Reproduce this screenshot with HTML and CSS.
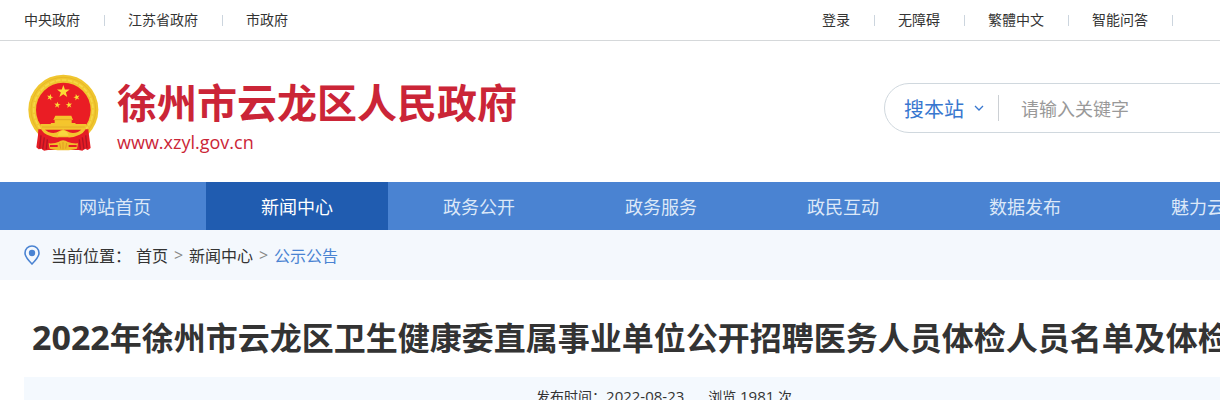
FILE: index.html
```html
<!DOCTYPE html>
<html lang="zh-CN">
<head>
  <meta charset="utf-8">
  <title>徐州市云龙区人民政府 - 公示公告</title>
  <link rel="stylesheet" href="styles.css">
</head>
<body>
  <div class="topbar">
    <div class="wrap">
      <ul class="top-links">
        <li><a href="#">中央政府</a></li>
        <li><a href="#">江苏省政府</a></li>
        <li><a href="#">市政府</a></li>
      </ul>
      <ul class="top-links top-tools">
        <li><a href="#">登录</a></li>
        <li><a href="#">无障碍</a></li>
        <li><a href="#">繁體中文</a></li>
        <li><a href="#">智能问答</a></li>
      </ul>
    </div>
  </div>

  <header class="header">
    <div class="wrap">
      <a class="brand" href="#">
        <svg class="emblem" viewBox="53 40 213 234" width="71" height="78" aria-hidden="true">
          <defs>
            <path id="star" d="M0 -10 L2.4 -3.2 L9.5 -3.1 L3.8 1.2 L5.9 8.1 L0 4 L-5.9 8.1 L-3.8 1.2 L-9.5 -3.1 L-2.4 -3.2 Z" />
          </defs>
          <!-- wheat ring -->
          <circle cx="159" cy="147" r="105" fill="#f0c62f" />
          <circle cx="159" cy="147" r="97" fill="none" stroke="#e2b023" stroke-width="2" />
          <circle cx="159" cy="147" r="89" fill="none" stroke="#f6d746" stroke-width="5" stroke-dasharray="14 4" />
          <circle cx="159" cy="148" r="82" fill="#ea1d24" />
          <!-- stars -->
          <g fill="#fbdc35">
            <use href="#star" transform="translate(159 93) scale(2)" />
            <use href="#star" transform="translate(119 110) rotate(15)" />
            <use href="#star" transform="translate(199 110) rotate(-15)" />
            <use href="#star" transform="translate(141 133) rotate(8)" />
            <use href="#star" transform="translate(176 133) rotate(-8)" />
          </g>
          <!-- gate -->
          <path d="M135 165 H183 L188 178 H184 V187 H195 L198 196 H119 L122 187 H133 V178 H129 Z" fill="#f5c52c" />
          <path d="M131 177 H186" stroke="#d99a1d" stroke-width="2" />
          <!-- drapes -->
          <path d="M84 206 H234 L236 224 L241 262 L232 268 L224 264 L216 270 L205 268 H113 L101 270 L94 264 L85 266 L78 260 L83 224 Z" fill="#e51c25" />
          <path d="M92 224 L88 262 M102 230 L97 266 M111 236 L108 266 M226 224 L230 262 M216 230 L221 266 M207 236 L210 266" stroke="#b01424" stroke-width="4" />
          <!-- ribbon and gear -->
          <path d="M90 190 H228 Q230 212 208 222 Q186 232 172 230 H146 Q132 232 110 222 Q88 212 90 190 Z" fill="#f3c52e" />
          <path d="M104 207 H213 L203 214 Q184 221 171 212 Q158 202 146 212 Q132 221 114 214 Z" fill="#e51c25" />
          <path d="M95 199 H223" stroke="#dca524" stroke-width="2" />
          <path d="M142 225 Q146 210 158 210 Q171 210 175 225 Z" fill="#f9d640" />
          <path d="M115 248 Q134 249 144 244 Q158 234 173 244 Q184 249 203 248 L200 264 Q184 268 175 269 H142 Q132 268 118 264 Z" fill="#f0bd2a" />
          <path d="M119 256 H142 M175 256 H199" stroke="#e51c25" stroke-width="6" />
          <path d="M148 247 L151 264 M158 244 V266 M169 247 L166 264" stroke="#dc8d20" stroke-width="2" />
        </svg>
        <span class="brand-text">
          <span class="brand-name">徐州市云龙区人民政府</span>
          <span class="brand-url">www.xzyl.gov.cn</span>
        </span>
      </a>
      <form class="search">
        <div class="scope">
          <select aria-label="搜索范围">
            <option>搜本站</option>
          </select>
          <svg viewBox="0 0 10 6" width="10" height="6" aria-hidden="true">
            <path d="M1 1 L5 5 L9 1" fill="none" stroke="#3877cf" stroke-width="1.3" />
          </svg>
        </div>
        <input type="text" placeholder="请输入关键字" aria-label="请输入关键字">
      </form>
    </div>
  </header>

  <nav class="nav">
    <div class="wrap">
      <a href="#">网站首页</a>
      <a href="#" class="active">新闻中心</a>
      <a href="#">政务公开</a>
      <a href="#">政务服务</a>
      <a href="#">政民互动</a>
      <a href="#">数据发布</a>
      <a href="#">魅力云龙</a>
    </div>
  </nav>

  <div class="crumbs">
    <div class="wrap">
      <svg class="pin" viewBox="0 0 16 20" width="16" height="20" aria-hidden="true">
        <path d="M8 1 C4 1 1 4 1 8 C1 12 4 15 8 19 C12 15 15 12 15 8 C15 4 12 1 8 1 Z" fill="none" stroke="#4a83d2" stroke-width="1.6" />
        <circle cx="8" cy="8" r="3.2" fill="#4a83d2" />
      </svg>
      <span class="label">当前位置：</span>
      <a href="#">首页</a>
      <span class="sep">&gt;</span>
      <a href="#">新闻中心</a>
      <span class="sep">&gt;</span>
      <a href="#" class="current">公示公告</a>
    </div>
  </div>

  <main class="wrap article">
    <h1><span class="year">2022</span>年徐州市云龙区卫生健康委直属事业单位公开招聘医务人员体检人员名单及体检</h1>
    <div class="meta">
      <span>发布时间：<span class="num">2022-08-23</span></span>
      <span>浏览 <span class="num">1981</span> 次</span>
    </div>
  </main>
</body>
</html>
```
FILE: styles.css
```css
* {
  box-sizing: border-box;
  margin: 0;
  padding: 0;
}

html {
  overflow: hidden auto;
}

body {
  min-width: 1328px;
  background: #fff;
  color: #333;
  font-family: "Open Sans", "Noto Sans CJK SC", sans-serif;
  font-size: 14px;
}

a {
  color: inherit;
  text-decoration: none;
}

ul {
  list-style: none;
}

.wrap {
  display: flex;
  align-items: center;
  width: 1280px;
  margin: 0 auto;
}

/* top bar */
.topbar {
  border-bottom: 1px solid #d5d8da;
}

.topbar .wrap {
  justify-content: space-between;
  height: 40px;
}

.top-links {
  display: flex;
  align-items: center;
  line-height: 20px;
}

.top-links li {
  display: flex;
  align-items: center;
}

.top-links li::after {
  content: "";
  width: 1px;
  height: 11px;
  margin: 0 23px 0 24px;
  background: #ccd5de;
}

.top-links:first-child li:last-child::after {
  display: none;
}

.top-tools {
  margin-right: 108px;
}

/* header */
.header .wrap {
  justify-content: space-between;
  height: 141px;
}

.brand {
  display: flex;
  align-items: center;
  gap: 18px;
  padding-left: 4px;
  color: #cb2537;
}

.emblem {
  margin-top: 2px;
}

.brand-text {
  display: flex;
  flex-direction: column;
  gap: 1px;
  padding-top: 7px;
}

.brand-name {
  font-size: 40px;
  font-weight: bold;
  line-height: 52px;
}

.brand-url {
  font-size: 18px;
  line-height: 24px;
}

.search {
  display: flex;
  align-items: center;
  width: 420px;
  height: 50px;
  margin-bottom: 7px;
  border: 1px solid #d0d8de;
  border-radius: 25px;
}

.scope {
  display: flex;
  align-items: center;
  gap: 10px;
  height: 26px;
  padding: 0 14px 0 19px;
  border-right: 1px solid #ccd0d4;
}

.search select,
.search input {
  appearance: none;
  border: 0;
  outline: 0;
  background: none;
  font-family: inherit;
}

.search select {
  padding-top: 2px;
  color: #3877cf;
  font-size: 20px;
}

.search input {
  flex: 1;
  min-width: 0;
  padding: 2px 22px 0;
  font-size: 18px;
}

.search input::placeholder {
  color: #999;
}

/* main nav */
.nav {
  background: #4a83d2;
}

.nav a {
  width: 182px;
  padding-top: 2px;
  color: #dce8f8;
  font-size: 18px;
  line-height: 46px;
  text-align: center;
}

.nav .active {
  background: #205cb0;
  color: #fff;
}

/* breadcrumb */
.crumbs {
  background: #f4f8fd;
  font-size: 16px;
}

.crumbs .wrap {
  height: 50px;
}

.pin {
  margin-right: 11px;
}

.label {
  margin-right: 5px;
}

.sep {
  width: 21px;
  color: #888;
  text-align: center;
}

.crumbs .current {
  color: #4a83d2;
}

/* article */
.article {
  display: block;
  padding-top: 34px;
}

.article h1 {
  padding-left: 8px;
  font-size: 32px;
  line-height: 48px;
  white-space: nowrap;
}

.year {
  font-size: 34px;
  line-height: 1;
}

.meta {
  display: flex;
  justify-content: center;
  gap: 24px;
  margin-top: 15px;
  background: #f4f9fe;
  line-height: 40px;
}

.num {
  font-size: 15px;
  line-height: 1;
}
```
